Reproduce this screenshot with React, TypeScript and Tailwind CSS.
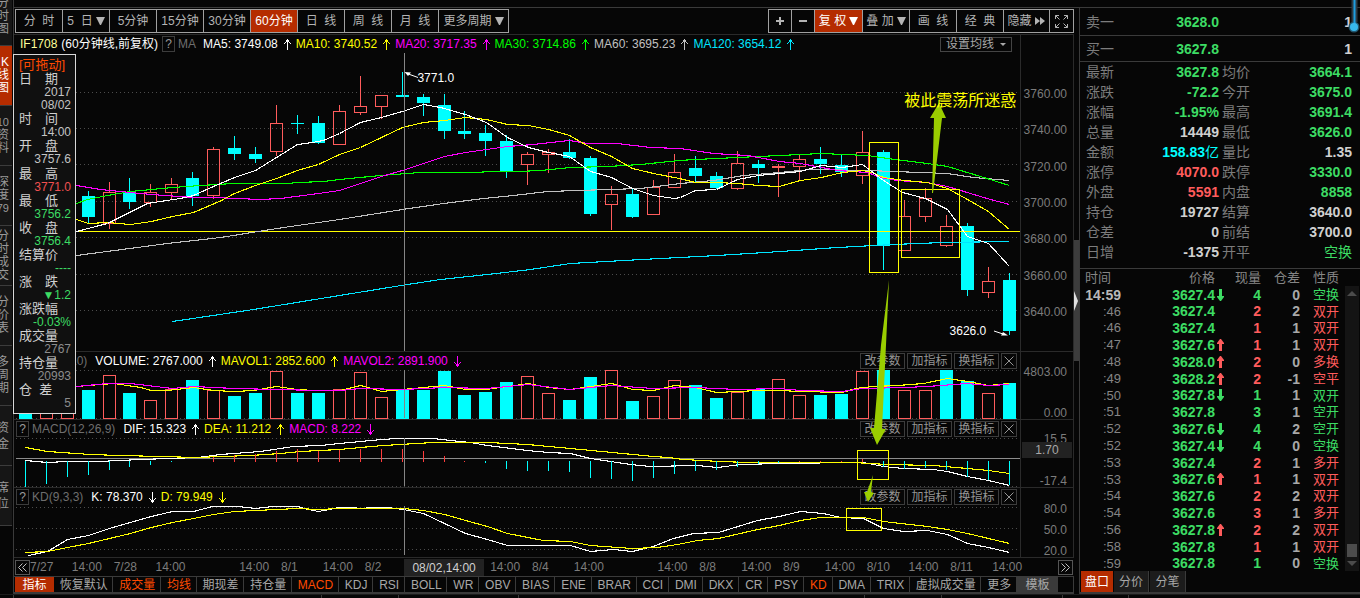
import React from "react";

type Pts = number[];

const UP = "#ff5c5c";
const DOWN = "#00ffff";

/* ---------- chart data ---------- */

const barX = (i: number) => Math.floor(25.3 + i * 20.936);

/* [index, rising, high, bodyTop, bodyBottom, low] */
const candles: [number, 0 | 1, number, number, number, number][] = [
  [0, 0, 190, 196, 217, 223], [1, 1, 182, 192, 223, 229], [2, 1, 182, 192, 223, 229],
  [3, 0, 191, 196, 217, 223], [4, 1, 182, 192, 224, 229], [5, 0, 178, 192, 202, 209],
  [6, 1, 184, 192, 203, 207], [7, 1, 178, 184, 193, 200], [8, 0, 172, 178, 196, 206],
  [9, 1, 147, 149, 196, 199], [10, 0, 136, 148, 154, 160], [11, 0, 147, 154, 159, 163],
  [12, 1, 105, 123, 152, 156], [13, 0, 115, 123, 124, 134], [14, 0, 116, 123, 143, 144],
  [15, 1, 105, 111, 145, 145], [16, 1, 76, 106, 113, 115], [17, 1, 95, 95, 107, 119],
  [18, 0, 72, 95, 97, 97], [19, 0, 94, 97, 103, 116], [20, 0, 94, 105, 131, 139],
  [21, 0, 111, 131, 134, 139], [22, 0, 125, 133, 141, 156], [23, 0, 135, 141, 171, 178],
  [24, 1, 152, 154, 165, 185], [25, 1, 149, 152, 155, 173], [26, 0, 139, 152, 158, 159],
  [27, 0, 156, 158, 214, 216], [28, 1, 186, 194, 205, 230], [29, 0, 189, 194, 217, 218],
  [30, 1, 180, 187, 215, 215], [31, 1, 154, 172, 188, 188], [32, 0, 156, 168, 176, 183],
  [33, 0, 172, 176, 188, 189], [34, 1, 151, 163, 189, 190], [35, 0, 160, 164, 168, 183],
  [36, 1, 164, 166, 168, 197], [37, 1, 155, 159, 167, 181], [38, 0, 147, 159, 164, 174],
  [39, 0, 155, 165, 172, 177], [40, 1, 131, 152, 176, 184], [41, 0, 150, 152, 246, 270],
  [42, 1, 200, 216, 251, 251], [43, 1, 188, 198, 217, 222], [44, 1, 215, 226, 246, 247],
  [45, 0, 223, 226, 290, 296], [46, 1, 267, 281, 293, 298], [47, 0, 273, 280, 331, 335],
];

const volumeTops: number[] = [
  400, 398, 402, 390, 375, 393, 400, 389, 380, 390, 396, 393, 371, 393, 393, 389,
  372, 397, 390, 390, 371, 395, 392, 382, 376, 393, 400, 377, 370, 401, 396, 380,
  385, 398, 392, 389, 379, 395, 395, 394, 371, 370, 390, 390, 370, 381, 393, 383,
];
const volumeRising = new Set([1, 2, 4, 6, 7, 9, 12, 15, 16, 17, 24, 25, 28, 30, 31, 34, 36, 37, 40, 42, 43, 46]);

/* [index, positive, top, bottom] */
const macdBars: [number, 0 | 1, number, number][] = [
  [0, 0, 461, 487], [1, 0, 461, 484], [2, 0, 461, 477], [3, 0, 461, 475], [4, 0, 461, 470],
  [5, 0, 461, 467], [6, 0, 461, 465], [7, 0, 461, 462], [9, 1, 457, 462], [10, 1, 455, 462],
  [11, 1, 454, 462], [12, 1, 451, 462], [13, 1, 449, 462], [14, 1, 451, 462], [15, 1, 450, 462],
  [16, 1, 449, 462], [17, 1, 449, 462], [18, 1, 449, 462], [19, 1, 451, 462], [20, 1, 456, 462],
  [21, 1, 461, 462], [22, 0, 461, 463], [23, 0, 461, 469], [24, 0, 461, 471], [25, 0, 461, 471],
  [26, 0, 461, 472], [27, 0, 461, 478], [28, 0, 461, 479], [29, 0, 461, 481], [30, 0, 461, 478],
  [31, 0, 461, 474], [32, 0, 461, 471], [33, 0, 461, 470], [34, 0, 461, 467], [35, 0, 461, 464],
  [36, 0, 461, 463], [37, 1, 461, 462], [38, 1, 461, 462], [39, 1, 461, 462], [40, 1, 459, 462],
  [41, 0, 461, 467], [42, 0, 461, 469], [43, 0, 461, 468], [44, 0, 461, 470], [45, 0, 461, 477],
  [46, 0, 461, 480], [47, 0, 461, 485],
];

const ma5: Pts = [76,231,107,223,147,203,166,200,180,198,193,195,213,186,234,177,255,170,276,157,297,144,312,142,323,140,339,133,360,122,381,117,402,111,423,104,440,107,465,114,486,122,507,137,528,147,548,152,569,156,590,171,611,177,632,188,653,195,674,198,680,197,695,190,716,189,737,179,758,175,779,173,800,171,821,165,842,167,862,164,883,180,902,192,925,198,947,209,967,236,988,243,1009,266];
const ma10: Pts = [76,219,88,223,107,222,130,224,151,221,172,216,193,212,221,200,234,193,255,185,276,178,297,170,318,164,339,154,360,147,381,137,402,127,423,122,444,120,465,117,486,119,507,124,528,125,548,129,569,135,590,147,611,156,632,168,653,173,679,178,695,182,716,182,737,183,758,185,779,186,800,180,821,177,842,172,862,170,872,172,883,177,904,180,927,182,947,188,967,199,988,211,1009,229];
const ma20: Pts = [76,185,100,189,130,192,151,194,193,197,213,197,260,199,280,198,318,193,339,190,360,183,381,176,402,170,423,163,444,156,465,152,486,149,507,146,533,144,569,140,587,143,617,143,650,147,680,148,713,153,747,155,779,161,800,163,821,167,837,170,867,172,880,177,897,180,927,182,947,186,970,193,990,199,1009,204];
const ma30: Pts = [76,203,87,199,107,195,130,191,172,187,200,185,233,183,287,183,297,182,323,181,339,179,380,175,420,172,475,172,490,171,517,171,540,170,570,167,607,166,640,164,679,160,695,159,758,156,821,153,867,155,887,158,927,163,947,166,980,176,1009,185];
const ma60: Pts = [76,255,167,243,220,237,283,227,339,219,402,209,443,203,483,198,513,195,547,191,577,190,640,188,680,183,713,180,743,175,779,172,810,169,867,170,893,171,947,173,973,177,1009,180];
const ma120: Pts = [172,321,253,309,339,295,407,284,440,279,487,274,530,269,570,263,623,260,679,257,717,255,780,251,837,247,893,244,943,242,1009,241];

const mavol1: Pts = [76,386,100,384,113,383,127,385,140,387,151,390,167,390,193,387,213,390,234,391,253,390,276,386,297,389,313,390,340,390,360,385,381,391,402,389,423,387,444,385,465,389,486,389,507,386,528,383,548,387,569,389,590,386,611,383,632,389,653,390,674,385,695,387,716,392,737,391,758,390,779,390,800,391,842,392,855,388,873,386,897,385,923,383,947,378,967,381,988,385,1009,383];
const mavol2: Pts = [76,386,107,383,130,383,172,388,193,386,234,388,276,389,318,390,340,390,360,388,402,389,444,387,486,388,507,386,528,384,569,389,611,385,653,388,695,387,716,388,737,389,779,388,800,390,842,391,862,388,904,387,927,386,967,383,988,385,1009,384];

const dif: Pts = [25,460,47,462,67,461,97,461,120,460,140,459,197,457,220,454,260,451,293,446,320,445,339,443,360,441,381,439,397,438,433,438,450,440,470,442,487,445,527,450,548,452,570,453,590,458,630,464,650,466,697,465,717,467,740,464,780,463,853,462,863,462,883,466,903,468,933,469,947,471,967,476,988,480,1009,485];
const dea: Pts = [25,447,47,451,90,454,120,455,160,456,197,457,220,456,250,455,280,453,300,451,339,449,360,447,383,445,433,442,487,442,527,444,570,448,612,452,653,456,668,457,683,459,720,461,747,462,853,462,887,464,933,465,967,468,988,470,1009,473];

const kLine: Pts = [28,555,47,551,67,539,88,535,109,528,151,516,172,511,193,511,212,506,238,506,255,508,272,506,297,506,308,509,318,511,339,507,350,507,361,508,372,507,387,507,403,509,423,513,444,523,465,533,487,539,507,545,570,545,590,551,613,549,632,551,653,546,673,538,693,533,718,532,757,520,779,516,800,511,823,513,840,517,863,518,883,528,903,531,927,530,947,534,967,543,988,547,1009,552];
const dLine: Pts = [25,552,47,551,67,547,88,543,109,538,130,533,151,527,172,522,193,518,213,514,234,511,255,510,276,509,297,508,318,509,339,508,403,508,423,510,444,514,465,520,487,526,507,533,543,540,570,541,590,545,632,548,657,547,677,544,697,540,718,538,757,529,779,525,800,520,820,517,863,517,883,521,927,526,947,529,967,533,988,538,1009,543];

/* ---------- chart parts ---------- */

function Line({ pts, color }: { pts: Pts; color: string }) {
  const d = pts.reduce((s, v, i) => s + (i % 2 ? "," : " ") + (v + 0.5), "");
  return <polyline points={d.trim()} fill="none" stroke={color} strokeWidth="1.1" shapeRendering="crispEdges" />;
}

function Dots({ y }: { y: number }) {
  return <line x1="16" x2="1020" y1={y + 0.5} y2={y + 0.5} stroke="#4c4c4c" strokeDasharray="1 3" shapeRendering="crispEdges" />;
}

function Plot({ top, height, className, label, children }: {
  top: number; height: number; className: string; label: string; children: React.ReactNode;
}) {
  return (
    <svg role="img" aria-label={label} viewBox={`14 ${top} 1006 ${height}`} preserveAspectRatio="none" className={`block w-full ${className}`}>
      {children}
    </svg>
  );
}

function Cursor({ y1, y2 }: { y1: number; y2: number }) {
  return <rect x="404" y={y1} width="1" height={y2 - y1} fill="#858585" shapeRendering="crispEdges" />;
}

function PricePlot() {
  return (
    <Plot top={53} height={298} className="h-[298px]" label="K线图">
      {[92, 128, 164, 201, 237, 274, 310].map((y) => <Dots key={y} y={y} />)}
      <g shapeRendering="crispEdges">
        {candles.map(([i, up, h, t, b, l]) => {
          const x = barX(i);
          return up ? (
            <g key={i} fill="none" stroke={UP}>
              {h < t && <line x1={x + 0.5} x2={x + 0.5} y1={h} y2={t} />}
              <rect x={x - 5.5} y={t + 0.5} width="12" height={Math.max(1, b - t - 1)} />
              {l > b && <line x1={x + 0.5} x2={x + 0.5} y1={b} y2={l} />}
            </g>
          ) : (
            <g key={i} fill={DOWN}>
              <rect x={x} y={h} width="1" height={l - h} />
              <rect x={x - 6} y={t} width="13" height={b - t} />
            </g>
          );
        })}
        <rect x="14" y="231" width="1006" height="1" fill="#ffff00" />
      </g>
      <Line pts={ma120} color="#00e5ff" />
      <Line pts={ma60} color="#c0c0c0" />
      <Line pts={ma30} color="#00ff00" />
      <Line pts={ma20} color="#ff00ff" />
      <Line pts={ma10} color="#ffff00" />
      <Line pts={ma5} color="#ffffff" />
      <Cursor y1={53} y2={351} />
    </Plot>
  );
}

function VolumePlot() {
  return (
    <Plot top={370} height={49} className="h-[49px]" label="成交量">
      <Dots y={370} />
      <Dots y={418} />
      <g shapeRendering="crispEdges">
        {volumeTops.map((t, i) => {
          const x = barX(i);
          return volumeRising.has(i)
            ? <rect key={i} x={x - 5.5} y={t + 0.5} width="12" height={418 - t} fill="none" stroke={UP} />
            : <rect key={i} x={x - 6} y={t} width="13" height={419 - t} fill={DOWN} />;
        })}
      </g>
      <Line pts={mavol1} color="#ffff00" />
      <Line pts={mavol2} color="#ff00ff" />
      <Cursor y1={370} y2={418} />
    </Plot>
  );
}

function MacdPlot() {
  return (
    <Plot top={438} height={49} className="h-[49px]" label="MACD">
      <Dots y={438} />
      <Dots y={486} />
      <rect x="16" y="458" width="1004" height="1" fill="#8c8c8c" shapeRendering="crispEdges" />
      <Line pts={dif} color="#ffffff" />
      <Line pts={dea} color="#ffff00" />
      {macdBars.map(([i, up, t, b]) => (
        <rect key={i} x={barX(i)} y={t} width="1" height={b - t} fill={up ? "#ff3c3c" : DOWN} shapeRendering="crispEdges" />
      ))}
      <Cursor y1={438} y2={486} />
    </Plot>
  );
}

function KdPlot() {
  return (
    <Plot top={506} height={51} className="h-[51px]" label="KD">
      <Dots y={507} />
      <Dots y={528} />
      <Dots y={549} />
      <Line pts={kLine} color="#ffffff" />
      <Line pts={dLine} color="#ffff00" />
      <Cursor y1={506} y2={555} />
    </Plot>
  );
}

function Arrow({ dir }: { dir: "up" | "down" }) {
  return (
    <svg width="18" height="13" viewBox="0 0 18 13" className="shrink-0" fill="none" stroke="currentColor" shapeRendering="crispEdges" aria-hidden="true">
      {dir === "up"
        ? <path d="M9.5 1V12M8.5 2V4M10.5 2V4M7.5 4V5M11.5 4V5M6.5 5V6M12.5 5V6" />
        : <path d="M9.5 1V12M8.5 9V11M10.5 9V11M7.5 8V9M11.5 8V9M6.5 7V8M12.5 7V8" />}
    </svg>
  );
}

type LegendItem = { text: string; color: string; dir: "up" | "down" };

function Legend({ items }: { items: LegendItem[] }) {
  return (
    <>
      {items.map((it) => (
        <span key={it.text} className={`flex items-center whitespace-pre ${it.color}`}>
          {it.text}
          <Arrow dir={it.dir} />
        </span>
      ))}
    </>
  );
}

function HelpButton() {
  return (
    <button type="button" aria-label="指标说明" className="mr-[3px] flex h-4 w-[13px] shrink-0 items-center justify-center border border-[#3c3c3c] text-[#9a9a9a]">
      ?
    </button>
  );
}

function PanelHeader({ name, items }: { name: string; items: LegendItem[] }) {
  return (
    <div className="flex h-[18px] items-center pl-[2px] pr-[3px]">
      <HelpButton />
      <span className="mr-2 text-[#6e6e6e]">{name}</span>
      <Legend items={items} />
      <div className="ml-auto flex gap-[2px] text-[#959595]">
        {["改参数", "加指标", "换指标"].map((t) => (
          <button key={t} type="button" className="flex h-4 w-[45px] items-center justify-center border border-[#3c3c3c] leading-none">
            {t}
          </button>
        ))}
        <button type="button" aria-label="关闭" className="flex h-4 w-4 items-center justify-center border border-[#3c3c3c]">
          <svg width="10" height="10" viewBox="0 0 10 10" stroke="currentColor" strokeWidth="1"><path d="M.5 .5L9.500 9.500M9.500 .5L.5 9.500" /></svg>
        </button>
      </div>
    </div>
  );
}

function Panel({ children, axis }: { children: React.ReactNode; axis: React.ReactNode }) {
  return (
    <section className="flex border-b border-[#2a2a2a]">
      <div className="min-w-0 flex-1">{children}</div>
      <div className="flex w-[54px] shrink-0 flex-col items-end overflow-hidden border-x border-[#2a2a2a] pr-[6px] leading-3 text-[#7c7c7c]">
        {axis}
      </div>
    </section>
  );
}

/* ---------- toolbars ---------- */

function Caret() {
  return (
    <svg width="9" height="8" viewBox="0 0 9 8" className="ml-[3px] shrink-0" fill="currentColor" aria-hidden="true">
      <path d="M0 0H9L5 8H4Z" />
    </svg>
  );
}

function ToolButton({ children, active, w, label }: { children: React.ReactNode; active?: boolean; w: string; label?: string }) {
  return (
    <button
      type="button"
      aria-label={label}
      className={`flex h-[22px] items-center justify-center whitespace-pre border-r border-[#a0a0a0] leading-none last:border-r-0 ${w} ${active ? "bg-[#b52c00] text-white" : "text-[#b4b4b4]"}`}
    >
      {children}
    </button>
  );
}

function Toolbar() {
  return (
    <div className="flex h-[27px] shrink-0 items-start justify-between border-b border-[#2a2a2a] pl-px pt-px">
      <div className="flex border border-[#a0a0a0]">
        <ToolButton w="w-[47px]">{"分  时"}</ToolButton>
        <ToolButton w="w-[47px]">{"5  日"}<Caret /></ToolButton>
        <ToolButton w="w-[47px]">5分钟</ToolButton>
        <ToolButton w="w-[47px]">15分钟</ToolButton>
        <ToolButton w="w-[47px]">30分钟</ToolButton>
        <ToolButton w="w-[47px]" active>60分钟</ToolButton>
        <ToolButton w="w-[47px]">{"日  线"}</ToolButton>
        <ToolButton w="w-[47px]">{"周  线"}</ToolButton>
        <ToolButton w="w-[47px]">{"月  线"}</ToolButton>
        <ToolButton w="w-[69px]">更多周期<Caret /></ToolButton>
      </div>
      <div className="flex border border-[#a0a0a0]">
        <ToolButton w="w-[23px]" label="放大">
          <svg width="8" height="8" viewBox="0 0 8 8" fill="currentColor"><path d="M3 0H5V3H8V5H5V8H3V5H0V3H3Z" /></svg>
        </ToolButton>
        <ToolButton w="w-[23px]" label="缩小">
          <svg width="8" height="8" viewBox="0 0 8 8" fill="currentColor"><path d="M0 3H8V5H0Z" /></svg>
        </ToolButton>
        <ToolButton w="w-[48px]" active>{"复 权"}<Caret /></ToolButton>
        <ToolButton w="w-[47px]">{"叠 加"}<Caret /></ToolButton>
        <ToolButton w="w-[47px]">{"画  线"}</ToolButton>
        <ToolButton w="w-[47px]">{"经  典"}</ToolButton>
        <ToolButton w="w-[46px]">
          隐藏
          <svg width="12" height="8" viewBox="0 0 12 8" className="ml-[2px]" fill="currentColor"><path d="M1 0L6 4L1 8ZM6 0L11 4L6 8Z" /></svg>
        </ToolButton>
        <ToolButton w="w-[23px]" label="全屏">
          <svg width="13" height="13" viewBox="0 0 13 13" fill="none" stroke="currentColor">
            <path d="M.5 4V.5H4M.5 .5L4.500 4.500M9 .5H12.500V4M12.500 .5L8.500 4.500M.5 9V12.500H4M.5 12.500L4.500 8.500M9 12.500H12.500V9M12.500 12.500L8.500 8.500" />
          </svg>
        </ToolButton>
      </div>
    </div>
  );
}

const rail: { chars: string[]; active?: boolean; wide?: boolean }[] = [
  { chars: ["K", "线", "图"], active: true },
  { chars: ["F10", "资", "料"] },
  { chars: ["深", "度", "79"] },
  { chars: ["分", "时", "成", "交"] },
  { chars: ["分", "价", "表"] },
  { chars: ["多", "周", "期"] },
  { chars: ["资", "金"], wide: true },
  { chars: ["席", "位"], wide: true },
];

function LeftRail() {
  return (
    <nav aria-label="视图" className="flex w-[13px] shrink-0 flex-col overflow-hidden text-[#9a9a9a]">
      <button type="button" className="flex h-[46px] w-3 flex-col items-end justify-end border-b border-[#3c3c3c] bg-[#161616] pb-[9px] pr-[3px] leading-[13px]">
        {["分", "时", "图"].map((c) => <span key={c}>{c}</span>)}
      </button>
      {rail.map((r) => (
        <button
          type="button"
          key={r.chars.join("")}
          className={`flex h-[60px] w-3 flex-col items-end justify-center border-b border-[#3c3c3c] pr-[3px] ${r.wide ? "leading-4" : "leading-[13px]"} ${r.active ? "bg-[#b52c00] text-white" : "bg-[#161616]"}`}
        >
          {r.chars.map((c) => <span key={c} className={c.length > 1 ? "text-[11px]" : ""}>{c}</span>)}
        </button>
      ))}
    </nav>
  );
}

/* ---------- quote box following the cursor ---------- */

const G = "text-[#3ddc64]";
const boxRows: [string, string, string][] = [
  ["l", "日　期", ""], ["v", "2017", "text-[#c4c4c4]"], ["v", "08/02", "text-[#c4c4c4]"],
  ["l", "时　间", ""], ["v", "14:00", "text-[#c4c4c4]"],
  ["l", "开　盘", ""], ["v", "3757.6", "text-[#c4c4c4]"],
  ["l", "最　高", ""], ["v", "3771.0", "text-[#f25050]"],
  ["l", "最　低", ""], ["v", "3756.2", G],
  ["l", "收　盘", ""], ["v", "3756.4", G],
  ["l", "结算价", ""], ["v", "----", G],
  ["l", "涨　跌", ""], ["v", "▼1.2", G],
  ["l", "涨跌幅", ""], ["v", "-0.03%", G],
  ["l", "成交量", ""], ["v", "2767", "text-[#8c8c8c]"],
  ["l", "持仓量", ""], ["v", "20993", "text-[#8c8c8c]"],
  ["l", "仓  差", ""], ["v", "5", "text-[#8c8c8c]"],
];

function QuoteBox() {
  return (
    <aside className="absolute -left-px top-[19px] flex h-[360px] w-[63px] flex-col border border-[#d8d8d8] bg-[#101010] pb-[3px] pl-[5px] pr-1 pt-[3px] leading-none">
      <div className="flex flex-1 items-center text-[13px] text-[#ff4a00]">[可拖动]</div>
      {boxRows.map(([kind, text, color], i) =>
        kind === "l"
          ? <div key={i} className="flex flex-1 items-center whitespace-pre text-[13px] text-[#d0d0d0]">{text}</div>
          : <div key={i} className={`flex flex-1 items-center justify-end whitespace-pre ${color}`}>{text}</div>,
      )}
    </aside>
  );
}

/* ---------- hand-drawn notes over the panels ---------- */

function Annotations() {
  return (
    <div className="pointer-events-none absolute inset-y-0 left-0 right-[54px] text-white">
      <svg viewBox="14 35 1006 523" preserveAspectRatio="none" className="absolute inset-0 h-full w-full" aria-hidden="true">
        <g fill="none" stroke="#ffff00" shapeRendering="crispEdges">
          <rect x="869.5" y="142.5" width="29" height="130" />
          <rect x="901.5" y="189.5" width="58" height="68" />
          <rect x="857.5" y="450.5" width="31" height="29" />
          <rect x="846.5" y="508.5" width="35" height="22" />
        </g>
        <g fill="#9acd00">
          <path d="M939 103L946 118L942 118L933 193L932 193L934 118L930 118Z" />
          <path d="M889 280L886 345L882 429L886 429L877 445L870 428L874 428L881 345Z" />
          <path d="M873 475L871 492L874 493L868 502L864 492L867 492Z" />
        </g>
        <g stroke="#ffffff" fill="#ffffff">
          <path d="M418 77.500L407 73.500" />
          <path d="M404.500 72L411 72.500L408 76Z" stroke="none" />
          <path d="M994 331L1003 334" />
          <path d="M1008 335.500L1001 335.500L1003 332Z" stroke="none" />
        </g>
      </svg>
      <span className="absolute left-[40.1%] top-[37px] leading-3">3771.0</span>
      <span className="absolute left-[93%] top-[290px] leading-3">3626.0</span>
      <span className="absolute left-[88.5%] top-[58px] whitespace-nowrap text-base leading-4 text-[#ffff00]">被此震荡所迷惑</span>
    </div>
  );
}

/* ---------- time axis and indicator tabs ---------- */

const times = [
  "7/27", "14:00", "7/28", "14:00", "", "14:00", "8/1", "14:00", "8/2", "", "", "14:00",
  "8/4", "14:00", "", "14:00", "8/8", "14:00", "8/9", "14:00", "8/10", "14:00", "8/11", "14:00",
];

function PageButton({ label, flip }: { label: string; flip?: boolean }) {
  return (
    <button type="button" aria-label={label} className="flex h-[15px] w-[15px] shrink-0 items-center justify-center border border-[#555] text-[#c0c0c0]">
      <svg width="9" height="9" viewBox="0 0 9 9" fill="none" stroke="currentColor">
        <path d={flip ? "M.5 .5L4.500 4.500L.5 8.500M4.500 .5L8.500 4.500L4.500 8.500" : "M4.500 .5L.5 4.500L4.500 8.500M8.500 .5L4.500 4.500L8.500 8.500"} />
      </svg>
    </button>
  );
}

function TimeAxis() {
  return (
    <div className="relative flex h-[18px] shrink-0 items-center pl-px pr-px">
      <PageButton label="向前" />
      <div className="mr-[24px] grid h-full min-w-0 flex-1 grid-cols-[repeat(24,minmax(0,1fr))] text-[#7c7c7c]">
        {times.map((t, i) => (
          <span key={i} className="relative flex items-center">
            {t}
          </span>
        ))}
      </div>
      <PageButton label="向后" flip />
      <span className="absolute left-[36.8%] top-px flex h-[17px] w-20 items-center justify-center bg-[#222] text-[#d0d0d0]">08/02,14:00</span>
    </div>
  );
}

const tabs = [
  "恢复默认", "成交量", "均线", "期现差", "持仓量", "MACD", "KDJ", "RSI", "BOLL", "WR", "OBV", "BIAS", "ENE",
  "BRAR", "CCI", "DMI", "DKX", "CR", "PSY", "KD", "DMA", "TRIX", "虚拟成交量", "更多",
];
const selected = new Set(["成交量", "均线", "MACD", "KD"]);

function IndicatorTabs() {
  return (
    <div className="flex h-[18px] shrink-0 overflow-hidden border-b-2 border-t border-b-[#3a3a3a] border-t-[#3a3a3a] pl-px leading-none">
      <button type="button" className="flex w-[39px] shrink-0 items-center justify-center bg-[#b52c00] text-white">指标</button>
      <div className="flex min-w-0 flex-1">
        {tabs.map((t) => (
          <button
            key={t}
            type="button"
            className={`flex min-w-0 items-center justify-center whitespace-nowrap border-r border-[#3a3a3a] pl-[6px] pr-[5px] ${selected.has(t) ? "text-[#ff4a00]" : "text-[#a8a8a8]"}`}
          >
            {t}
          </button>
        ))}
      </div>
      <button type="button" className="flex w-[41px] shrink-0 items-center justify-center bg-[#3a3a3a] text-[#a8a8a8]">模板</button>
      <span className="w-4 shrink-0 border-r border-[#3a3a3a]" />
    </div>
  );
}

/* ---------- right side ---------- */

const W = "text-[#d0d0d0]";
const R = "text-[#ff5c5c]";
const quotes: [string, string, string, string, string, string][] = [
  ["最新", "3627.8", G, "均价", "3664.1", G],
  ["涨跌", "-72.2", G, "今开", "3675.0", G],
  ["涨幅", "-1.95%", G, "最高", "3691.4", G],
  ["总量", "14449", W, "最低", "3626.0", G],
  ["金额", "158.83亿", "text-[#00ffff]", "量比", "1.35", W],
  ["涨停", "4070.0", R, "跌停", "3330.0", G],
  ["外盘", "5591", R, "内盘", "8858", G],
  ["持仓", "19727", W, "结算", "3640.0", W],
  ["仓差", "0", W, "前结", "3700.0", W],
  ["日增", "-1375", W, "开平", "空换", G],
];

const ticks: [string, string, "" | "u" | "d", number, 0 | 1, string, string, 0 | 1][] = [
  ["14:59", "3627.4", "d", 4, 0, "0", "空换", 0],
  [":46", "3627.4", "", 2, 1, "2", "双开", 1],
  [":46", "3627.4", "", 1, 1, "1", "双开", 1],
  [":47", "3627.6", "u", 1, 1, "1", "双开", 1],
  [":48", "3628.0", "u", 2, 1, "0", "多换", 1],
  [":49", "3628.2", "u", 2, 1, "-1", "空平", 1],
  [":50", "3627.8", "d", 1, 0, "1", "双开", 0],
  [":51", "3627.8", "", 3, 0, "1", "空开", 0],
  [":52", "3627.6", "d", 4, 0, "2", "空开", 0],
  [":52", "3627.4", "d", 4, 0, "0", "空换", 0],
  [":53", "3627.4", "", 2, 1, "1", "多开", 1],
  [":53", "3627.6", "u", 1, 1, "1", "双开", 1],
  [":54", "3627.6", "", 2, 1, "2", "双开", 1],
  [":54", "3627.6", "", 3, 1, "1", "多开", 1],
  [":56", "3627.8", "u", 2, 1, "2", "双开", 1],
  [":58", "3627.8", "", 1, 1, "1", "双开", 1],
  [":59", "3627.8", "", 1, 0, "0", "空换", 0],
];

function OrderRow({ label, price, className }: { label: string; price: string; className: string }) {
  return (
    <div className={`flex items-center border-b border-[#3a3a3a] pl-[6px] pr-2 text-sm leading-none ${className}`}>
      <span className="w-10 text-[#7c7c7c]">{label}</span>
      <span className={`w-[93px] text-right font-bold ${G}`}>{price}</span>
      <span className="flex-1 text-right font-bold text-[#d0d0d0]">1</span>
    </div>
  );
}

function QuoteTable() {
  return (
    <div className="border-b border-[#3a3a3a] pb-[6px]">
      <table className="w-full table-fixed border-collapse text-sm leading-none">
        <colgroup><col className="w-[46px]" /><col className="w-[93px]" /><col className="w-[45px]" /><col /></colgroup>
        <tbody>
          {quotes.map(([a, av, ac, b, bv, bc]) => (
            <tr key={a} className="h-5">
              <th scope="row" className="whitespace-nowrap p-0 pl-[6px] text-left font-normal text-[#7c7c7c]">{a}</th>
              <td className={`whitespace-nowrap p-0 text-right font-bold ${ac}`}>
                {av.endsWith("亿") ? <>{av.slice(0, -1)}<span className="font-normal">亿</span></> : av}
              </td>
              <th scope="row" className="whitespace-nowrap p-0 pl-[3px] text-left font-normal text-[#7c7c7c]">{b}</th>
              <td className={`whitespace-nowrap p-0 pr-2 text-right ${bv === "空换" ? "font-normal" : "font-bold"} ${bc}`}>{bv}</td>
            </tr>
          ))}
        </tbody>
      </table>
    </div>
  );
}

function TickArrow({ dir }: { dir: "u" | "d" }) {
  return (
    <svg width="7" height="12" viewBox="0 0 7 12" className={`ml-[2px] block ${dir === "u" ? R : G}`} fill="currentColor" aria-hidden="true">
      {dir === "u" ? <path d="M3 0H4L7 4V5H5V12H2V5H0V4Z" /> : <path d="M3 12H4L7 8V7H5V0H2V7H0V8Z" />}
    </svg>
  );
}

function TickList() {
  return (
    <div className="flex">
      <table className="min-w-0 flex-1 table-fixed border-collapse text-sm leading-none">
        <colgroup>
          <col className="w-[41px]" /><col className="w-[94px]" /><col className="w-[11px]" /><col className="w-[35px]" /><col className="w-[39px]" /><col />
        </colgroup>
        <thead>
          <tr className="h-[17px] whitespace-nowrap text-[13px] text-[#858585]">
            <th scope="col" className="p-0 pl-[5px] text-left font-normal">时间</th>
            <th scope="col" className="p-0 text-right font-normal">价格</th>
            <th className="p-0" aria-label="涨跌方向" />
            <th scope="col" className="p-0 text-right font-normal">现量</th>
            <th scope="col" className="p-0 text-right font-normal">仓差</th>
            <th scope="col" className="p-0 pr-[6px] text-right font-normal">性质</th>
          </tr>
        </thead>
        <tbody>
          {ticks.map(([t, p, d, n, nu, c, k, ku], i) => (
            <tr key={i} className="h-[17px] whitespace-nowrap nth-[5n+2]:h-4">
              <td className={`p-0 text-right ${i === 0 ? "font-bold text-[#b8b8b8]" : "text-[13px] text-[#858585]"}`}>{t}</td>
              <td className={`p-0 text-right font-bold ${G}`}>{p}</td>
              <td className="p-0">{d && <TickArrow dir={d} />}</td>
              <td className={`p-0 text-right font-bold ${nu ? R : G}`}>{n}</td>
              <td className="p-0 text-right font-bold text-[#a8a8a8]">{c}</td>
              <td className={`p-0 pr-[6px] text-right text-[13px] ${ku ? R : G}`}>{k}</td>
            </tr>
          ))}
        </tbody>
      </table>
      <div className="mr-px mt-[17px] flex w-[14px] flex-col items-center bg-[#141414] py-[5px] text-[#4c4c4c]">
        <svg width="10" height="5" viewBox="0 0 10 5" fill="currentColor" aria-hidden="true"><path d="M5 0L10 5H0Z" /></svg>
        <span className="mb-1 mt-auto h-[13px] w-[10px] bg-[#4c4c4c]" />
        <svg width="10" height="5" viewBox="0 0 10 5" fill="currentColor" aria-hidden="true"><path d="M5 5L10 0H0Z" /></svg>
      </div>
    </div>
  );
}

function SidePanel() {
  return (
    <aside className="relative flex w-[281px] shrink-0 flex-col border-l border-[#3a3a3a]">
      <OrderRow label="卖一" price="3628.0" className="h-7" />
      <OrderRow label="买一" price="3627.8" className="h-[26px]" />
      <QuoteTable />
      <TickList />
      <div className="flex flex-1 gap-px border-b-2 border-[#3a3a3a] pl-px leading-none">
        <button type="button" className="w-8 bg-[#b52c00] text-white">盘口</button>
        <button type="button" className="w-[35px] border-r border-[#3a3a3a] bg-[#1c1c1c] text-[#a8a8a8]">分价</button>
        <button type="button" className="w-[36px] border-r border-[#3a3a3a] bg-[#1c1c1c] text-[#a8a8a8]">分笔</button>
      </div>
      <svg width="12" height="34" viewBox="0 0 12 34" className="absolute -top-2 right-0" aria-hidden="true">
        <path d="M3.500 0H9.500V22H3.500Z" fill="#2c3a44" />
        <circle cx="6" cy="27" r="5.500" fill="#24566e" />
        <path d="M5.500 0H7.500V24H5.500Z" fill="#1e9ee0" />
        <circle cx="6" cy="27" r="4" fill="#38b8ec" />
      </svg>
    </aside>
  );
}

/* ---------- page ---------- */

const averages: LegendItem[] = [
  { text: "MA5: 3749.08", color: "text-white", dir: "up" },
  { text: "MA10: 3740.52", color: "text-[#ffff00]", dir: "up" },
  { text: "MA20: 3717.35", color: "text-[#ff00ff]", dir: "up" },
  { text: "MA30: 3714.86", color: "text-[#00ff00]", dir: "up" },
  { text: "MA60: 3695.23", color: "text-[#c0c0c0]", dir: "up" },
  { text: "MA120: 3654.12", color: "text-[#00e5ff]", dir: "up" },
];

export default function App() {
  return (
    <div className="flex min-h-screen flex-col overflow-hidden bg-[#060606] font-['Liberation_Sans','Noto_Sans_CJK_SC',sans-serif] text-xs leading-none text-[#b4b4b4]">
      <div className="flex flex-1">
        <LeftRail />
        <div className="flex min-w-0 flex-1 flex-col border-l border-[#3a3a3a]">
          <div className="h-2 shrink-0 border-b border-[#3a3a3a]" />
          <div className="flex flex-1">
            <main className="flex min-w-0 flex-1 flex-col">
              <Toolbar />
              <div className="relative">
                <Panel
                  axis={
                    <div className="mt-[53px] flex h-[230px] flex-col justify-between">
                      {["3760.00", "3740.00", "3720.00", "3700.00", "3680.00", "3660.00", "3640.00"].map((p) => (
                        <span key={p}>{p}</span>
                      ))}
                    </div>
                  }
                >
                  <div className="flex h-[18px] items-center whitespace-nowrap pl-[6px] pr-2">
                    <h1 className="flex gap-1 pr-1 text-white"><span className="text-[#ffff99]">IF1708</span>(60分钟线,前复权)</h1>
                    <HelpButton />
                    <span className="mr-[7px] text-[#6e6e6e]">MA</span>
                    <Legend items={averages} />
                    <button type="button" className="ml-auto flex h-[15px] w-[72px] items-center justify-center gap-[6px] border border-[#444] leading-none text-[#a8a8a8]">
                      设置均线
                      <svg width="6" height="3" viewBox="0 0 6 3" fill="currentColor"><path d="M0 0H6L3 3Z" /></svg>
                    </button>
                  </div>
                  <PricePlot />
                </Panel>
                <Panel
                  axis={
                    <div className="flex flex-1 flex-col items-end justify-between pt-[14px]"><span>4803.00</span><span>0.00</span></div>
                  }
                >
                  <PanelHeader
                    name="VOL(5,10)"
                    items={[
                      { text: "VOLUME: 2767.000", color: "text-white", dir: "up" },
                      { text: "MAVOL1: 2852.600", color: "text-[#ffff00]", dir: "up" },
                      { text: "MAVOL2: 2891.900", color: "text-[#ff00ff]", dir: "down" },
                    ]}
                  />
                  <VolumePlot />
                </Panel>
                <Panel
                  axis={
                    <div className="flex flex-1 flex-col items-end pt-[13px]">
                      <span className="h-[9px] overflow-hidden">15.5</span>
                      <span className="-mr-[5px] flex h-4 w-[50px] items-center justify-center bg-[#222] text-[#a8a8a8]">1.70</span>
                      <span className="mt-auto">-17.4</span>
                    </div>
                  }
                >
                  <PanelHeader
                    name="MACD(12,26,9)"
                    items={[
                      { text: "DIF: 15.323", color: "text-white", dir: "up" },
                      { text: "DEA: 11.212", color: "text-[#ffff00]", dir: "up" },
                      { text: "MACD: 8.222", color: "text-[#ff00ff]", dir: "down" },
                    ]}
                  />
                  <MacdPlot />
                </Panel>
                <Panel
                  axis={
                    <div className="flex flex-1 flex-col items-end justify-between pt-[15px]"><span>80.0</span><span>50.0</span><span>20.0</span></div>
                  }
                >
                  <PanelHeader
                    name="KD(9,3,3)"
                    items={[
                      { text: "K: 78.370", color: "text-white", dir: "down" },
                      { text: "D: 79.949", color: "text-[#ffff00]", dir: "down" },
                    ]}
                  />
                  <KdPlot />
                </Panel>
                <Annotations />
                <QuoteBox />
              </div>
              <TimeAxis />
              <IndicatorTabs />
            </main>
            <div className="flex w-[5px] shrink-0 flex-col pt-[232px]">
              <div className="flex h-[121px] items-center bg-[#3c3c3c]">
                <svg width="4" height="20" viewBox="0 0 4 20" fill="#e0e0e0" aria-hidden="true"><path d="M0 0L4 10L0 20Z" /></svg>
              </div>
            </div>
            <SidePanel />
          </div>
        </div>
      </div>
      <div className="flex h-1 shrink-0 border-t border-[#1c1c1c]">
        <span className="w-[14px] border-r border-[#3a3a3a]" />
        <span className="w-[308px] border-r border-[#3a3a3a]" />
        <span className="w-[77px] border-r border-[#3a3a3a]" />
        <span className="w-[120px] border-r border-[#3a3a3a]" />
        <span className="w-[346px] border-r border-[#3a3a3a]" />
        <span className="w-[77px] border-r border-[#3a3a3a]" />
        <span className="w-[121px] border-r border-[#3a3a3a]" />
        <span className="w-[66px] border-r border-[#3a3a3a]" />
      </div>
    </div>
  );
}
